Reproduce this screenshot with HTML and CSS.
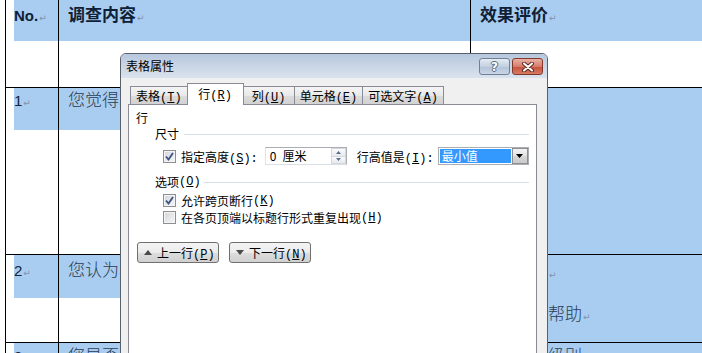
FILE: index.html
```html
<!DOCTYPE html>
<html lang="zh-CN">
<head>
<meta charset="utf-8">
<title>表格属性</title>
<link rel="stylesheet" href="styles.css">
</head>
<body>
<div class="page">

  <!-- document table behind the dialog -->
  <div class="doc-table">
    <div class="cell c1"><p class="shade head"><span class="latin">No.</span><span class="pm">↵</span></p></div>
    <div class="cell c2"><p class="shade head">调查内容<span class="pm">↵</span></p></div>
    <div class="cell c3"><p class="shade head">效果评价<span class="pm">↵</span></p></div>

    <div class="cell c1"><p class="shade r1"><span class="latin num">1</span><span class="pm">↵</span></p></div>
    <div class="cell c2"><p class="shade r1">您觉得本次活动的内容是否丰富？<span class="pm">↵</span></p></div>
    <div class="cell c3 fill r1-fill">
      <p>丰富<span class="pm">↵</span></p>
      <p>一般<span class="pm">↵</span></p>
      <p>不丰富<span class="pm">↵</span></p>
    </div>

    <div class="cell c1"><p class="shade r2"><span class="latin num">2</span><span class="pm">↵</span></p></div>
    <div class="cell c2"><p class="shade r2">您认为本次活动对您的学习有帮助吗？<span class="pm">↵</span></p></div>
    <div class="cell c3 fill r2-fill">
      <p>很有帮助<span class="pm">↵</span></p>
      <p>一般<span class="pm">↵</span></p>
      <p>对我很有帮助<span class="pm">↵</span></p>
    </div>

    <div class="cell c1"><p class="shade r3"><span class="latin num">3</span><span class="pm">↵</span></p></div>
    <div class="cell c2"><p class="shade r3">您是否愿意再次参加此类活动？<span class="pm">↵</span></p></div>
    <div class="cell c3 fill r3-fill">
      <p>提高一个级别<span class="pm">↵</span></p>
    </div>
  </div>

  <!-- 表格属性 dialog -->
  <div class="dialog">
    <div class="titlebar">
      <span class="title">表格属性</span>
      <span class="cap-btn help">?</span>
      <span class="cap-btn close">
        <svg width="12" height="10" viewBox="0 0 12 10">
          <path d="M2 1.5 L10 8.5 M10 1.5 L2 8.5" stroke="#5b2a22" stroke-width="4" stroke-linecap="round"/>
          <path d="M2 1.5 L10 8.5 M10 1.5 L2 8.5" stroke="#fff" stroke-width="2" stroke-linecap="round"/>
        </svg>
      </span>
    </div>

    <div class="client">
      <div class="tabs">
        <span class="tab">表格<span class="key">(<u>T</u>)</span></span>
        <span class="tab active">行<span class="key">(<u>R</u>)</span></span>
        <span class="tab">列<span class="key">(<u>U</u>)</span></span>
        <span class="tab">单元格<span class="key">(<u>E</u>)</span></span>
        <span class="tab">可选文字<span class="key">(<u>A</u>)</span></span>
      </div>

      <div class="panel">
        <div class="panel-title">行</div>

        <div class="group-title">尺寸</div>
        <div class="field-row">
          <span class="check">
            <svg width="11" height="11" viewBox="0 0 11 11"><polyline points="2,5.5 4.5,8.5 9,2" fill="none" stroke="#3d5283" stroke-width="1.8"/></svg>
          </span>
          <span class="label">指定高度<span class="key">(<u>S</u>):</span></span>
          <span class="spin-input">
            <span class="spin-val">0<span class="gap"></span>厘米</span>
            <span class="spin">
              <span class="spin-btn"><svg width="5" height="3" viewBox="0 0 5 3"><polygon points="0,3 2.5,0 5,3" fill="#5c6f87"/></svg></span>
              <span class="spin-btn"><svg width="5" height="3" viewBox="0 0 5 3"><polygon points="0,0 2.5,3 5,0" fill="#5c6f87"/></svg></span>
            </span>
          </span>
          <span class="label second">行高值是<span class="key">(<u>I</u>):</span></span>
          <span class="combo">
            <span class="combo-val">最小值</span>
            <span class="combo-btn"><svg width="7" height="4" viewBox="0 0 7 4"><polygon points="0,0 3.5,4 7,0" fill="#000"/></svg></span>
          </span>
        </div>

        <div class="group-title options">选项<span class="key">(<u>O</u>)</span></div>
        <div class="check-row">
          <span class="check">
            <svg width="11" height="11" viewBox="0 0 11 11"><polyline points="2,5.5 4.5,8.5 9,2" fill="none" stroke="#3d5283" stroke-width="1.8"/></svg>
          </span>
          允许跨页断行<span class="key">(<u>K</u>)</span>
        </div>
        <div class="check-row">
          <span class="check"></span>
          在各页顶端以标题行形式重复出现<span class="key">(<u>H</u>)</span>
        </div>

        <div class="nav-row">
          <button class="btn">
            <svg width="8" height="5" viewBox="0 0 8 5"><polygon points="0,5 4,0 8,5" fill="#4a4a4a"/></svg>
            <span>上一行<span class="key">(<u>P</u>)</span></span>
          </button>
          <button class="btn">
            <svg width="8" height="5" viewBox="0 0 8 5"><polygon points="0,0 4,5 8,0" fill="#4a4a4a"/></svg>
            <span>下一行<span class="key">(<u>N</u>)</span></span>
          </button>
        </div>
      </div>
    </div>
  </div>

</div>
</body>
</html>
```

FILE: styles.css
```css
html, body {
    margin: 0;
    height: 100%;
    overflow: hidden;
    background: #fff;
}
.page {
    position: relative;
    height: 353px;
    overflow: hidden;
    font-family: "Noto Sans CJK SC", sans-serif;
}

/* ---------- document table ---------- */
.doc-table {
    display: grid;
    grid-template-columns: 53px 412px 1fr;
    grid-template-rows: 88px 167px 88px 60px;
    margin-left: 5px;
    border-left: 1px solid #000;
    font-size: 17px;
    font-weight: 300;
    color: #2b3b52;
}
.cell {
    box-sizing: border-box;
    border-right: 1px solid #000;
    border-bottom: 1px solid #000;
    overflow: hidden;
    white-space: nowrap;
}
.c1 {
    padding-left: 8px;
}
.c3 {
    border-right: none;
}
.cell p {
    margin: 0;
}
.shade {
    box-sizing: border-box;
    background: #a8cdf0;
}
.c2 .shade,
.c3 .shade {
    padding-left: 9px;
}
.head {
    height: 41px;
    padding-top: 2px;
    line-height: 24px;
    font-weight: bold;
    color: #0f2036;
}
.r1 {
    height: 42px;
    line-height: 22px;
}
.r2 {
    height: 43px;
    padding-top: 3px;
    line-height: 22px;
}
.r3 {
    height: 100%;
    padding-top: 1px;
    line-height: 22px;
}
.latin {
    font-family: "Liberation Sans", Arial, sans-serif;
    font-size: 15px;
    line-height: 0;
}
.num {
    font-weight: normal;
    color: #13243c;
}
.pm {
    font-family: "DejaVu Sans", sans-serif;
    font-size: 9px;
    font-weight: normal;
    line-height: 0;
    color: #7d91ac;
    margin-left: 1px;
}
.fill {
    background: #a8cdf0;
    padding-left: 9px;
    line-height: 21px;
}
.r1-fill {
    padding-top: 2px;
}
.r2-fill {
    padding-top: 5px;
}
.r3-fill {
    padding-top: 1px;
}

/* ---------- dialog ---------- */
.dialog {
    position: absolute;
    left: 120px;
    top: 53px;
    width: 428px;
    height: 330px;
    box-sizing: border-box;
    display: flex;
    flex-direction: column;
    border: 1px solid #57606b;
    border-radius: 6px 6px 0 0;
    background: #f0f0f0;
    font-size: 12px;
    color: #000;
}
.titlebar {
    display: flex;
    height: 24px;
    border-radius: 5px 5px 0 0;
    background: linear-gradient(#b7c7dc, #dae3ee);
}
.title {
    flex: 1;
    padding-left: 5px;
    line-height: 24px;
}
.cap-btn {
    box-sizing: border-box;
    display: flex;
    align-items: center;
    justify-content: center;
    width: 31px;
    height: 17px;
    margin-top: 4px;
    border-radius: 3px;
}
.help {
    margin-right: 2px;
    border: 1px solid #6f8098;
    background: linear-gradient(#e4ebf3, #c3d0e0 50%, #b2c2d6 51%, #c9d6e6);
    font-family: "DejaVu Sans", sans-serif;
    font-weight: bold;
    font-size: 12px;
    color: #fff;
    text-shadow: 1px 0 #56687f, -1px 0 #56687f, 0 1px #56687f, 0 -1px #56687f;
}
.close {
    margin-right: 4px;
    border: 1px solid #83372b;
    background: linear-gradient(#eab1a6, #d77c6c 50%, #c44f3c 51%, #d77b63);
}

.client {
    flex: 1;
    display: flex;
    flex-direction: column;
    padding: 5px 10px 0 7px;
}
.tabs {
    display: flex;
    align-items: flex-end;
    height: 21px;
    padding-left: 2px;
}
.tab {
    box-sizing: border-box;
    min-width: 52px;
    height: 18px;
    padding: 0 5px;
    border: 1px solid #898c95;
    border-bottom: none;
    background: linear-gradient(#f5f5f5, #e8e8e8 50%, #dcdcdc 51%, #d2d2d2);
    line-height: 17px;
    text-align: center;
    white-space: nowrap;
}
.tab + .tab {
    margin-left: -1px;
}
.tab.active {
    position: relative;
    z-index: 1;
    min-width: 57px;
    height: 22px;
    margin-bottom: -1px;
    background: #fff;
    line-height: 19px;
}
.key {
    font-family: "Liberation Mono", monospace;
    font-size: 12px;
    line-height: 0;
}
.panel {
    flex: 1;
    padding: 5px 7px 0;
    border: 1px solid #898c95;
    background: #fff;
}
.panel-title {
    line-height: 16px;
}
.group-title {
    display: flex;
    align-items: center;
    padding-left: 19px;
    line-height: 16px;
    white-space: nowrap;
}
.group-title::after {
    content: "";
    flex: 1;
    height: 1px;
    margin: 0 0 0 5px;
    background: #d5dfe5;
}
.options {
    margin-top: 9px;
}
.options::after {
    margin-left: 3px;
}

.field-row {
    display: flex;
    align-items: center;
    height: 18px;
    margin-top: 5px;
    padding-left: 27px;
}
.check {
    box-sizing: border-box;
    display: inline-flex;
    flex: none;
    align-items: center;
    justify-content: center;
    width: 13px;
    height: 13px;
    margin-right: 5px;
    border: 1px solid #8e8f8f;
    background: linear-gradient(135deg, #d2d5da, #f7f7f7);
    box-shadow: inset 0 0 0 1px #f4f4f4;
}
.label {
    margin-right: 7px;
    white-space: nowrap;
}
.label.second {
    margin-left: 10px;
    margin-right: 4px;
}
.spin-input {
    box-sizing: border-box;
    display: flex;
    width: 82px;
    height: 18px;
    border: 1px solid #abadb3;
    border-bottom-color: #dbdfe6;
    border-left-color: #e2e3ea;
    background: #fff;
}
.spin-val {
    flex: 1;
    padding-left: 4px;
    line-height: 16px;
}
.gap {
    display: inline-block;
    width: 6px;
}
.spin {
    display: flex;
    flex-direction: column;
    width: 15px;
}
.spin-btn {
    flex: 1;
    display: flex;
    align-items: center;
    justify-content: center;
    border: 1px solid #d3d7de;
    background: linear-gradient(#fafbfc, #e6e9ee);
}
.spin-btn + .spin-btn {
    border-top: none;
}
.combo {
    box-sizing: border-box;
    display: flex;
    width: 91px;
    height: 18px;
    padding: 1px;
    border: 1px solid #abadb3;
    background: #fff;
}
.combo-val {
    flex: 1;
    padding-left: 2px;
    background: #3399ff;
    color: #fff;
    line-height: 14px;
}
.combo-btn {
    box-sizing: border-box;
    display: flex;
    align-items: center;
    justify-content: center;
    width: 16px;
    margin: -1px -1px -1px 1px;
    border: 1px solid #8e8f8f;
    background: linear-gradient(#f3f3f3, #e3e3e3 50%, #d6d6d6 51%, #cbcbcb);
}

.check-row {
    display: flex;
    align-items: center;
    height: 17px;
    padding-left: 27px;
    white-space: nowrap;
}
.options + .check-row {
    margin-top: 2px;
}

.nav-row {
    display: flex;
    gap: 10px;
    margin-top: 16px;
    padding-left: 1px;
}
.btn {
    box-sizing: border-box;
    display: flex;
    align-items: center;
    gap: 5px;
    width: 82px;
    height: 21px;
    padding: 0 0 0 6px;
    border: 1px solid #707070;
    border-radius: 3px;
    background: linear-gradient(#f4f4f4, #ebebeb 50%, #dddddd 51%, #d0d0d0);
    font-family: "Noto Sans CJK SC", sans-serif;
    font-size: 12px;
    color: #000;
    white-space: nowrap;
}
```
